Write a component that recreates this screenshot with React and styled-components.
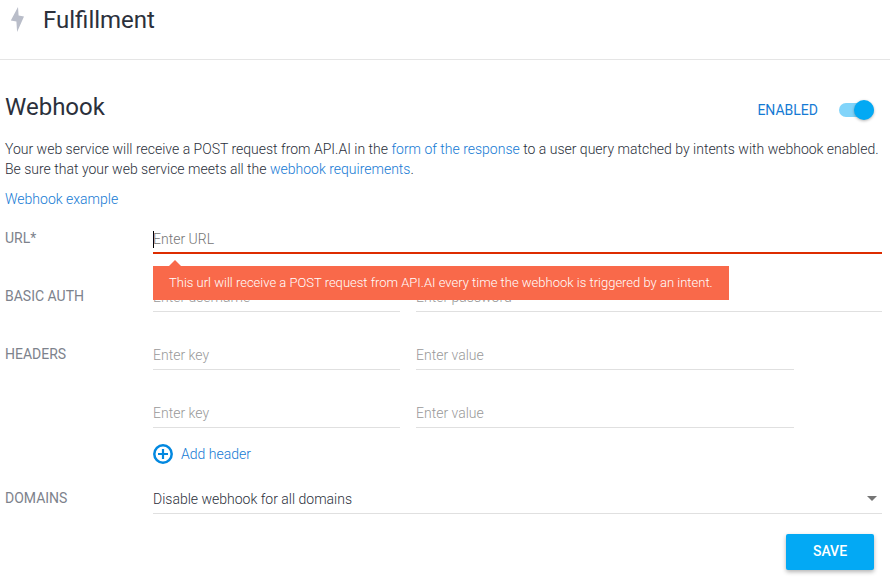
import React, { useState } from 'react';
import styled, { createGlobalStyle } from 'styled-components';

const GlobalStyle = createGlobalStyle`
  *, *::before, *::after {
    box-sizing: border-box;
  }

  body {
    margin: 0;
    background: #fff;
    color: #2b303b;
    font-family: Roboto, "Liberation Sans", sans-serif;
    font-size: 14px;
    font-weight: 300;
    line-height: 20px;
  }

  input, select, button {
    font: inherit;
    color: inherit;
  }
`;

const Header = styled.header`
  display: flex;
  align-items: flex-start;
  gap: 18px;
  height: 60px;
  padding: 6px 10px;
  border-bottom: 1px solid #e5e5e5;

  svg {
    display: block;
    width: 15px;
    height: 26px;
  }
`;

const Title = styled.h1`
  margin: 0;
  font-size: 24px;
  font-weight: 400;
  line-height: 28px;
`;

const Main = styled.main`
  padding: 32px 8px 12px 5px;
`;

const SectionHead = styled.div`
  display: flex;
  justify-content: space-between;
  padding-right: 8px;
  margin-bottom: 17px;
`;

const SectionTitle = styled(Title).attrs({ as: 'h2' })`
  line-height: 30px;
`;

const ToggleLabel = styled.label`
  display: flex;
  align-items: center;
  gap: 21px;
  padding-top: 6px;
  height: 30px;
  color: #157ad4;
  font-weight: 400;
  cursor: pointer;
`;

const Toggle = styled.input.attrs({ type: 'checkbox' })`
  appearance: none;
  position: relative;
  width: 35px;
  height: 14px;
  margin: 0;
  border-radius: 7px;
  background: #bdbdbd;
  cursor: pointer;

  &::before {
    content: '';
    position: absolute;
    top: -3px;
    left: 0;
    width: 20px;
    height: 20px;
    border-radius: 50%;
    background: #fafafa;
    box-shadow: 0 1px 3px rgba(0, 0, 0, 0.3);
  }

  &:checked {
    background: #81d4fa;
  }

  &:checked::before {
    left: 15px;
    background: #03a9f4;
  }
`;

const Text = styled.p`
  margin: 0 0 10px;
`;

const Link = styled.a`
  color: #157ad4;
  text-decoration: none;
`;

const Row = styled.div`
  display: grid;
  grid-template-columns: 148px minmax(0, 1fr);
  align-items: end;
  padding-top: ${(p) => p.$top || 28}px;
`;

const Label = styled.label`
  align-self: start;
  padding-top: 4px;
  color: #7d828c;
  font-weight: 400;
`;

const Pair = styled.div`
  display: grid;
  grid-template-columns: ${(p) => (p.$inset ? '247fr 378fr' : '247fr 466fr')};
  gap: 16px;
  padding-right: ${(p) => (p.$inset ? 88 : 0)}px;
`;

const Field = styled.div`
  position: relative;
`;

const Input = styled.input`
  display: block;
  width: 100%;
  height: 30px;
  padding: 1px 0 0;
  border: 0;
  border-bottom: 1px solid #e0e0e0;
  border-radius: 0;
  background: transparent;
  outline: none;

  &::placeholder {
    color: #999;
    opacity: 1;
  }

  &:required {
    padding-top: 2px;
    border-bottom: 2px solid #dd2c00;
  }

  &:required::placeholder {
    color: #757575;
  }

  /* steady caret while the field is still empty */
  &:required:placeholder-shown:focus {
    caret-color: transparent;
    background: linear-gradient(#000, #000) 0 7px / 1px 17px no-repeat;
  }
`;

const Tooltip = styled.div`
  position: absolute;
  z-index: 1;
  top: 42px;
  left: 0;
  padding: 7px 16px;
  background: #f9694a;
  color: #fff;
  font-size: 13px;
  white-space: nowrap;

  &::before {
    content: '';
    position: absolute;
    bottom: 100%;
    left: 16px;
    border: 6px solid transparent;
    border-top: 0;
    border-bottom-color: #f9694a;
  }
`;

const AddButton = styled.button`
  display: flex;
  align-items: center;
  gap: 8px;
  margin: 16px 0 0 148px;
  padding: 0;
  border: 0;
  background: none;
  color: #157ad4;
  cursor: pointer;
`;

const Select = styled.select`
  display: block;
  appearance: none;
  width: 100%;
  height: 30px;
  padding: 1px 24px 0 0;
  border: 0;
  border-bottom: 1px solid #e0e0e0;
  border-radius: 0;
  background: transparent;
  outline: none;
`;

const Arrow = styled.span`
  position: absolute;
  top: 12px;
  right: 5px;
  border: 5px solid transparent;
  border-top-color: #757575;
  border-bottom: 0;
  pointer-events: none;
`;

const Actions = styled.div`
  display: flex;
  justify-content: flex-end;
  padding: 20px 8px 0 0;
`;

const SaveButton = styled.button`
  width: 88px;
  height: 36px;
  padding: 0 0 2px;
  border: 0;
  border-radius: 2px;
  background: #03a9f4;
  box-shadow: 0 2px 4px rgba(0, 0, 0, 0.3);
  color: #fff;
  font-weight: 500;
  cursor: pointer;
`;

const Bolt = () => (
  <svg viewBox="0 0 15 26" fill="#b9bdc9" aria-hidden="true">
    <path d="M8 1 .8 14.6l5.6.9L7.1 26 14 10.6l-5.4-1z" />
  </svg>
);

const PlusCircle = () => (
  <svg width="20" height="20" viewBox="0 0 20 20" fill="none" stroke="#0288e0" strokeWidth="2.5" aria-hidden="true">
    <circle cx="10" cy="10" r="8.7" />
    <path d="M5 10h10M10 5v10" strokeWidth="2.2" />
  </svg>
);

const App = () => {
  const [enabled, setEnabled] = useState(true);

  return (
    <>
      <GlobalStyle />
      <Header>
        <Bolt />
        <Title>Fulfillment</Title>
      </Header>
      <Main>
        <SectionHead>
          <SectionTitle>Webhook</SectionTitle>
          <ToggleLabel>
            {enabled ? 'ENABLED' : 'DISABLED'}
            <Toggle checked={enabled} onChange={(e) => setEnabled(e.target.checked)} />
          </ToggleLabel>
        </SectionHead>
        <Text>
          Your web service will receive a POST request from API.AI in the{' '}
          <Link href="#response">form of the response</Link> to a user query matched by intents with
          webhook enabled. Be sure that your web service meets all the{' '}
          <Link href="#requirements">webhook requirements</Link>.
        </Text>
        <Link href="#example">Webhook example</Link>
        <form onSubmit={(e) => e.preventDefault()}>
          <Row $top={15}>
            <Label htmlFor="url">URL*</Label>
            <Field>
              <Input id="url" placeholder="Enter URL" required autoFocus aria-describedby="url-tip" />
              <Tooltip id="url-tip" role="tooltip">
                This url will receive a POST request from API.AI every time the webhook is triggered by an intent.
              </Tooltip>
            </Field>
          </Row>
          <Row>
            <Label htmlFor="username">BASIC AUTH</Label>
            <Pair>
              <Input id="username" placeholder="Enter username" />
              <Input type="password" placeholder="Enter password" aria-label="Password" />
            </Pair>
          </Row>
          <Row>
            <Label htmlFor="key-1">HEADERS</Label>
            <Pair $inset>
              <Input id="key-1" placeholder="Enter key" />
              <Input placeholder="Enter value" aria-label="Header value" />
            </Pair>
          </Row>
          <Row>
            <span />
            <Pair $inset>
              <Input placeholder="Enter key" aria-label="Header key" />
              <Input placeholder="Enter value" aria-label="Header value" />
            </Pair>
          </Row>
          <AddButton type="button">
            <PlusCircle />
            Add header
          </AddButton>
          <Row $top={20}>
            <Label htmlFor="domains">DOMAINS</Label>
            <Field>
              <Select id="domains">
                <option>Disable webhook for all domains</option>
                <option>Enable webhook for all domains</option>
              </Select>
              <Arrow />
            </Field>
          </Row>
          <Actions>
            <SaveButton type="submit">SAVE</SaveButton>
          </Actions>
        </form>
      </Main>
    </>
  );
};

export default App;
